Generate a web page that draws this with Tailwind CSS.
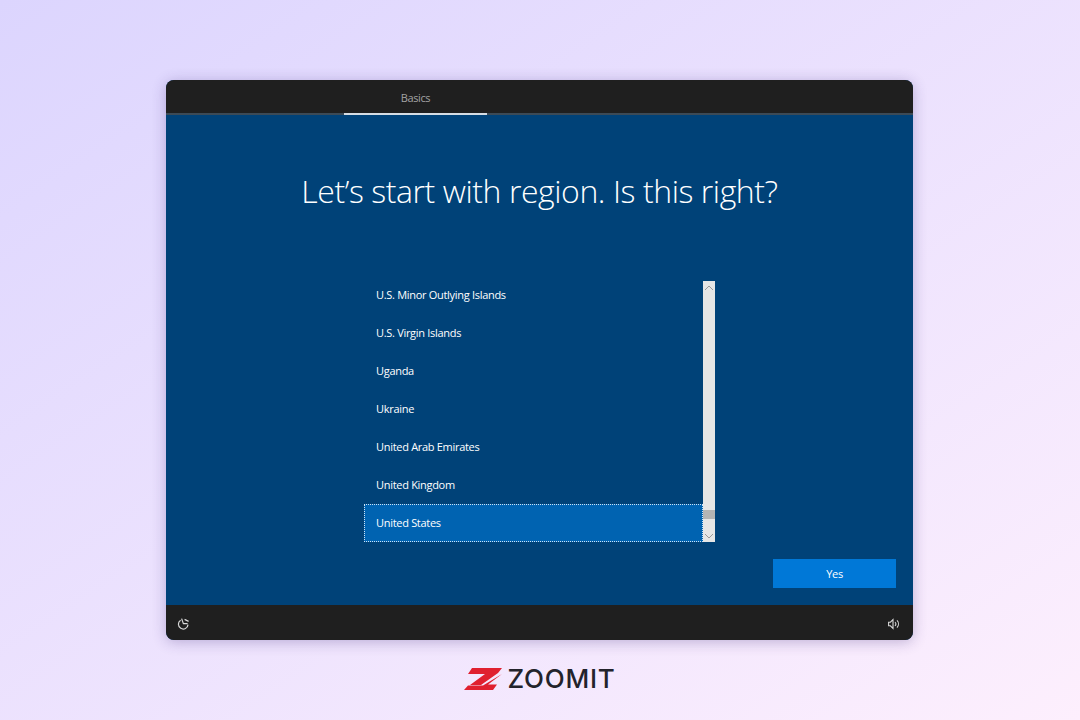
<!DOCTYPE html>
<html lang="en">
<head>
    <meta charset="UTF-8">
    <title>Let's start with region</title>
    <script src="https://cdn.jsdelivr.net/npm/@tailwindcss/browser@4"></script>
</head>
<body class="w-[1080px] h-[720px] overflow-hidden bg-gradient-to-br from-[#dcd5fe] to-[#fdeffd] font-['Open_Sans',sans-serif]">
    <div class="flex flex-col items-center pt-[80px]">
        <!-- setup window -->
        <div class="w-[747px] h-[560px] ml-[-1px] rounded-lg overflow-hidden flex flex-col bg-[#004278] shadow-[0_2px_14px_rgba(60,40,120,0.3)]">
            <div class="h-[35px] shrink-0 bg-[#1f1f1f] border-b-2 border-[#3c4a56] flex">
                <div class="ml-[178px] w-[143px] h-[35px] border-b-2 border-[#d6dde4] flex items-center justify-center pt-[3px] text-[11px] tracking-[-0.4px] text-[#a3a3a3]">Basics</div>
            </div>

            <div class="flex-1 flex flex-col">
                <h1 class="mt-[52px] h-[48px] text-center text-[32px] leading-[48px] font-light tracking-[-0.43px] text-white">Let’s start with region. Is this right?</h1>

                <div class="mt-[66px] ml-[198px] flex h-[261px]">
                    <ul class="w-[339px] overflow-hidden text-[11px] tracking-[-0.3px] text-white">
                        <li class="h-[33px] pl-[12px] pb-[4px] flex items-center">U.S. Minor Outlying Islands</li>
                        <li class="h-[38px] pl-[12px] flex items-center">U.S. Virgin Islands</li>
                        <li class="h-[38px] pl-[12px] flex items-center">Uganda</li>
                        <li class="h-[38px] pl-[12px] flex items-center">Ukraine</li>
                        <li class="h-[38px] pl-[12px] flex items-center">United Arab Emirates</li>
                        <li class="h-[38px] pl-[12px] flex items-center">United Kingdom</li>
                        <li class="h-[38px] pl-[11px] flex items-center bg-[#0063b1] border border-dotted border-[#cfe3f5]">United States</li>
                    </ul>
                    <div class="w-[12px] bg-[#e6e6e6] flex flex-col items-center justify-between">
                        <svg class="mt-[3px]" width="10" height="8" viewBox="0 0 10 8" fill="none" stroke="#9a9a9a" stroke-width="1"><path d="M1 6l4-4 4 4"/></svg>
                        <div class="flex flex-col w-full items-center">
                            <div class="w-full h-[9px] bg-[#b4b4b4] mb-[13px]"></div>
                            <svg class="mb-[2px]" width="10" height="8" viewBox="0 0 10 8" fill="none" stroke="#9a9a9a" stroke-width="1"><path d="M1 2l4 4 4-4"/></svg>
                        </div>
                    </div>
                </div>

                <div class="mt-[17px] flex justify-end pr-[17px]">
                    <button class="w-[123px] h-[29px] pt-[2px] bg-[#0078d7] text-[11px] tracking-[-0.3px] text-white">Yes</button>
                </div>
            </div>

            <div class="h-[35px] shrink-0 bg-[#1f1f1f] flex items-center justify-between pt-[3px] pl-[10px] pr-[14px]">
                <svg width="14" height="14" viewBox="0 0 14 14" fill="none" stroke="#d8d8d8" stroke-width="1.2">
                    <path d="M4.6 3.2A4.8 4.8 0 1 0 12 7.6"/>
                    <path d="M5.6 1.6 7.4 6.6H11.6M8.6 2.4 12.6 4.4"/>
                </svg>
                <svg width="11" height="12" viewBox="0 0 11 12" fill="none" stroke="#d8d8d8" stroke-width="1.1">
                    <path d="M0.6 4.2h1.8L5 1.6v8.8L2.4 7.8H0.6z"/>
                    <path d="M7 4a3 3 0 0 1 0 4M9 2.4a5.2 5.2 0 0 1 0 7.2"/>
                </svg>
            </div>
        </div>

        <!-- zoomit logo -->
        <div class="mt-[26px] flex items-center gap-[5px]">
            <svg width="38" height="22" viewBox="0 0 38 22" fill="#e0202f">
                <path d="M8 0H38L34 5 17 17H6L21 6H4z"/>
                <path d="M38 6 24 16.5H33L29 22H0L4 17.5H19z"/>
            </svg>
            <span class="text-[26px] leading-[26px] font-['Inter',sans-serif] font-medium tracking-[0.8px] text-[#23232b]">ZOOMIT</span>
        </div>
    </div>
</body>
</html>
